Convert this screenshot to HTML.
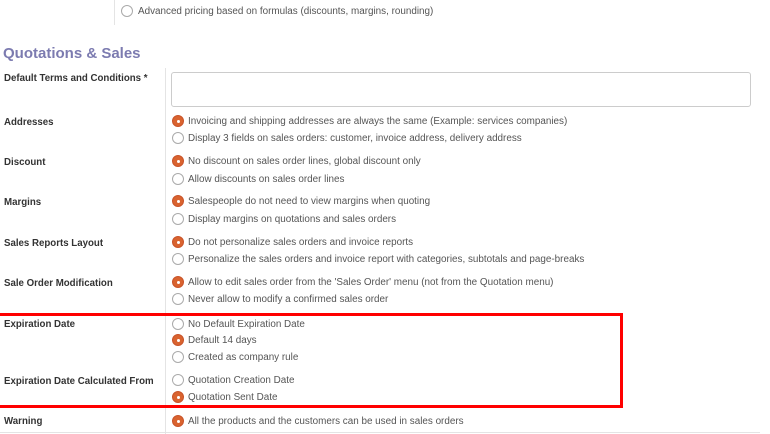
<!DOCTYPE html>
<html><head><style>
body{margin:0;width:770px;height:434px;background:#fff;position:relative;overflow:hidden;font-family:"Liberation Sans",sans-serif;color:#4c4c4c}
.a{position:absolute;white-space:nowrap}
.l{font-size:9.7px;font-weight:bold;color:#333;left:4px;margin-top:2px}
.t{font-size:9.9px;color:#555;left:188px;margin-top:1px}
.r{position:absolute;width:10px;height:10px;border:1px solid #aaa;border-radius:50%;background:#fff;box-sizing:content-box;margin-top:-1px}
.r.on{border-color:#c9542a;background:#d9632f}
.r.on::after{content:"";position:absolute;left:3.5px;top:3.5px;width:3px;height:3px;border-radius:50%;background:#fff}
</style></head><body>
<div class="a" style="left:114px;top:0;width:1px;height:25px;background:#e4e4e4"></div>
<div class="r" style="left:121px;top:6px"></div>
<div class="a" style="left:138px;top:6px;font-size:9.9px;color:#555">Advanced pricing based on formulas (discounts, margins, rounding)</div>
<div class="a" style="left:3px;top:45px;font-size:15px;font-weight:bold;color:#7c7bb0">Quotations &amp; Sales</div>
<div class="a" style="left:165px;top:68px;width:1px;height:366px;background:#e4e4e4"></div>
<div class="a l" style="top:71px">Default Terms and Conditions *</div>
<div class="a" style="left:171px;top:72px;width:580px;height:35px;border:1px solid #ccc;border-radius:3px;box-sizing:border-box"></div>

<div class="a l" style="top:115px">Addresses</div>
<div class="r on" style="left:172px;top:116px"></div><div class="a t" style="top:115px">Invoicing and shipping addresses are always the same (Example: services companies)</div>
<div class="r" style="left:172px;top:133px"></div><div class="a t" style="top:132px">Display 3 fields on sales orders: customer, invoice address, delivery address</div>

<div class="a l" style="top:155px">Discount</div>
<div class="r on" style="left:172px;top:156px"></div><div class="a t" style="top:155px">No discount on sales order lines, global discount only</div>
<div class="r" style="left:172px;top:174px"></div><div class="a t" style="top:173px">Allow discounts on sales order lines</div>

<div class="a l" style="top:195px">Margins</div>
<div class="r on" style="left:172px;top:196px"></div><div class="a t" style="top:195px">Salespeople do not need to view margins when quoting</div>
<div class="r" style="left:172px;top:214px"></div><div class="a t" style="top:213px">Display margins on quotations and sales orders</div>

<div class="a l" style="top:236px">Sales Reports Layout</div>
<div class="r on" style="left:172px;top:237px"></div><div class="a t" style="top:236px">Do not personalize sales orders and invoice reports</div>
<div class="r" style="left:172px;top:254px"></div><div class="a t" style="top:253px">Personalize the sales orders and invoice report with categories, subtotals and page-breaks</div>

<div class="a l" style="top:276px">Sale Order Modification</div>
<div class="r on" style="left:172px;top:277px"></div><div class="a t" style="top:276px">Allow to edit sales order from the 'Sales Order' menu (not from the Quotation menu)</div>
<div class="r" style="left:172px;top:294px"></div><div class="a t" style="top:293px">Never allow to modify a confirmed sales order</div>

<div class="a l" style="top:317px">Expiration Date</div>
<div class="r" style="left:172px;top:319px"></div><div class="a t" style="top:318px">No Default Expiration Date</div>
<div class="r on" style="left:172px;top:335px"></div><div class="a t" style="top:334px">Default 14 days</div>
<div class="r" style="left:172px;top:352px"></div><div class="a t" style="top:351px">Created as company rule</div>

<div class="a l" style="top:374px">Expiration Date Calculated From</div>
<div class="r" style="left:172px;top:375px"></div><div class="a t" style="top:374px">Quotation Creation Date</div>
<div class="r on" style="left:172px;top:392px"></div><div class="a t" style="top:391px">Quotation Sent Date</div>

<div class="a l" style="top:414px">Warning</div>
<div class="r on" style="left:172px;top:416px"></div><div class="a t" style="top:415px">All the products and the customers can be used in sales orders</div>
<div class="a" style="left:0;top:432px;width:760px;height:1px;background:#e4e4e4"></div>

<div class="a" style="left:-3px;top:313px;width:626px;height:95px;border:3px solid #f00;box-sizing:border-box"></div>
</body></html>
